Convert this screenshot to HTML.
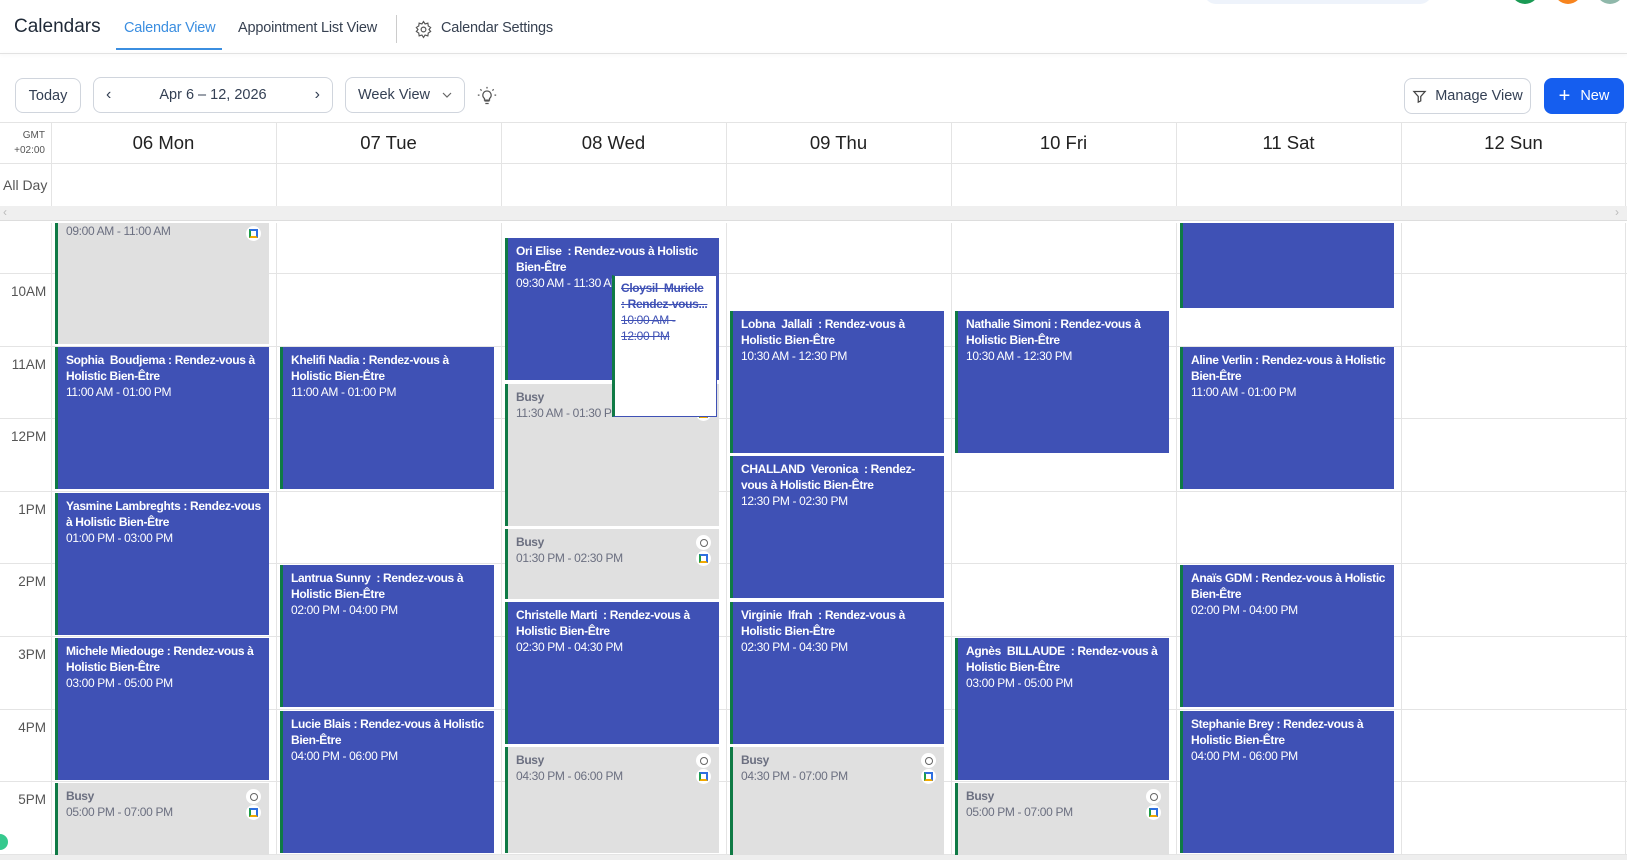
<!DOCTYPE html>
<html><head><meta charset="utf-8"><style>
*{box-sizing:border-box;margin:0;padding:0}
html,body{width:1627px;height:860px;overflow:hidden}
body{background:#fff;font-family:"Liberation Sans",Arial,sans-serif;color:#1f2937;position:relative}
.abs{position:absolute}
.btn{position:absolute;border:1px solid #d0d5dd;border-radius:8px;background:#fff;font-size:14.5px;color:#344054;display:flex;align-items:center;justify-content:center}
.vl{position:absolute;top:0;bottom:0;width:1px;background:#e4e4e4}
.ev{position:absolute;border-left:3px solid #0f7a45;background:#3f51b5;color:#fff;font-size:12px;letter-spacing:-0.35px;line-height:16px;padding:5px 7px 0 8px;overflow:hidden}
.ev b{font-weight:bold}
.busy{background:#e0e0e0;color:#6b6f80}
.ic{position:absolute;right:8px;width:15px;height:15px;border-radius:50%;background:#fff;display:flex;align-items:center;justify-content:center}
.ic1{top:6px}.ic2{top:22px}
.ic1 i{width:8px;height:8px;border:1.5px solid #666;border-radius:50%;display:block}
.ic2 i{width:9px;height:9px;border:2px solid #2f6fe0;border-bottom-color:#f2a900;border-left-color:#1e9e4a;display:block;background:#fff}
.hl{position:absolute;left:0;right:0;height:1px;background:#e4e4e4}
.lab{position:absolute;left:11px;width:35px;text-align:right;font-size:13.5px;color:#555}
.dh{position:absolute;top:123px;height:40px;font-size:18.5px;color:#222;display:flex;align-items:center;justify-content:center}
</style></head><body>
<div class="abs" style="left:1204px;top:-20px;width:228px;height:24px;border-radius:12px;background:#eef3fb"></div>
<div class="abs" style="left:1511px;top:-24px;width:28px;height:28px;border-radius:50%;background:#1a9a55"></div>
<div class="abs" style="left:1554px;top:-24px;width:28px;height:28px;border-radius:50%;background:#f7841e"></div>
<div class="abs" style="left:1596px;top:-24px;width:28px;height:28px;border-radius:50%;background:#8fb8aa"></div>
<div class="abs" style="left:14px;top:16px;font-size:19px;color:#1f2937">Calendars</div>
<div class="abs" style="left:124px;top:20px;font-size:14.5px;color:#3b8ee0;letter-spacing:-0.2px">Calendar View</div>
<div class="abs" style="left:116px;top:48px;width:106px;height:2px;background:#3b8ee0"></div>
<div class="abs" style="left:238px;top:20px;font-size:14.5px;color:#374151;letter-spacing:-0.2px">Appointment List View</div>
<div class="abs" style="left:396px;top:15px;width:1px;height:28px;background:#ccc"></div>
<svg class="abs" style="left:414px;top:20px" width="19" height="19" viewBox="0 0 24 24" fill="none" stroke="#555" stroke-width="1.5"><circle cx="12" cy="12" r="3"/><path d="M12 2l2 3 3.5-1 .5 3.5 3 2-2 2.5 2 2.5-3 2-.5 3.5-3.5-1-2 3-2-3-3.5 1-.5-3.5-3-2 2-2.5-2-2.5 3-2 .5-3.5 3.5 1z"/></svg>
<div class="abs" style="left:441px;top:20px;font-size:14.5px;color:#374151;letter-spacing:-0.2px">Calendar Settings</div>
<div class="abs" style="left:0;top:53px;width:1627px;height:1px;background:#e2e2e2;box-shadow:0 1px 3px rgba(0,0,0,.08)"></div>
<div class="btn" style="left:15px;top:78px;width:66px;height:35px">Today</div>
<div class="btn" style="left:93px;top:77px;width:240px;height:36px;justify-content:space-between;padding:0 12px"><span style="font-size:16px">‹</span><span>Apr 6 – 12, 2026</span><span style="font-size:16px">›</span></div>
<div class="btn" style="left:345px;top:77px;width:120px;height:36px;justify-content:space-between;padding:0 12px"><span>Week View</span><svg width="10" height="6" viewBox="0 0 10 6"><path d="M1 1l4 4 4-4" fill="none" stroke="#666" stroke-width="1.2"/></svg></div>
<svg class="abs" style="left:477px;top:86px" width="20" height="20" viewBox="0 0 24 24" fill="none" stroke="#555" stroke-width="1.5"><path d="M9 18h6M10 21h4M12 6a5 5 0 0 0-3 9v2h6v-2a5 5 0 0 0-3-9z"/><path d="M12 1v2M4 4l1.5 1.5M20 4l-1.5 1.5M1 11h2M21 11h2"/></svg>
<div class="btn" style="left:1404px;top:78px;width:127px;height:36px;gap:8px"><svg width="15" height="15" viewBox="0 0 24 24" fill="none" stroke="#444" stroke-width="2"><path d="M3 4h18l-7 8v7l-4 2v-9z"/></svg>Manage View</div>
<div class="btn" style="left:1544px;top:78px;width:80px;height:36px;background:#155eef;border-color:#155eef;color:#fff;gap:10px"><span style="font-size:20px;font-weight:300">+</span>New</div>
<div class="abs" style="left:0;top:122px;width:1627px;height:1px;background:#e4e4e4"></div>
<div class="abs" style="left:0;top:163px;width:1627px;height:1px;background:#e4e4e4"></div>
<div class="abs" style="left:51px;top:122px;width:1px;height:84px;background:#e4e4e4"></div>
<div class="abs" style="left:276px;top:122px;width:1px;height:84px;background:#e4e4e4"></div>
<div class="abs" style="left:501px;top:122px;width:1px;height:84px;background:#e4e4e4"></div>
<div class="abs" style="left:726px;top:122px;width:1px;height:84px;background:#e4e4e4"></div>
<div class="abs" style="left:951px;top:122px;width:1px;height:84px;background:#e4e4e4"></div>
<div class="abs" style="left:1176px;top:122px;width:1px;height:84px;background:#e4e4e4"></div>
<div class="abs" style="left:1401px;top:122px;width:1px;height:84px;background:#e4e4e4"></div>
<div class="abs" style="left:1625px;top:122px;width:1px;height:84px;background:#e4e4e4"></div>
<div class="abs" style="left:0;top:128px;width:45px;text-align:right;font-size:10px;color:#555;line-height:15px">GMT<br>+02:00</div>
<div class="abs" style="left:3px;top:177px;font-size:14px;color:#555">All Day</div>
<div class="dh" style="left:51px;width:225px">06 Mon</div>
<div class="dh" style="left:276px;width:225px">07 Tue</div>
<div class="dh" style="left:501px;width:225px">08 Wed</div>
<div class="dh" style="left:726px;width:225px">09 Thu</div>
<div class="dh" style="left:951px;width:225px">10 Fri</div>
<div class="dh" style="left:1176px;width:225px">11 Sat</div>
<div class="dh" style="left:1401px;width:225px">12 Sun</div>
<div class="abs" style="left:0;top:206px;width:1627px;height:15px;background:#efefef;border-bottom:1px solid #ddd"></div>
<div class="abs" style="left:3px;top:205px;font-size:12px;color:#bbb">‹</div>
<div class="abs" style="left:1615px;top:205px;font-size:12px;color:#bbb">›</div>
<div class="abs" style="left:0;top:223px;width:1627px;height:632px;overflow:hidden">
<div class="vl" style="left:51px"></div><div class="vl" style="left:276px"></div><div class="vl" style="left:501px"></div><div class="vl" style="left:726px"></div><div class="vl" style="left:951px"></div><div class="vl" style="left:1176px"></div><div class="vl" style="left:1401px"></div><div class="vl" style="left:1625px"></div>
<div class="hl" style="top:50px"></div><div class="hl" style="top:123px"></div><div class="hl" style="top:195px"></div><div class="hl" style="top:268px"></div><div class="hl" style="top:340px"></div><div class="hl" style="top:413px"></div><div class="hl" style="top:486px"></div><div class="hl" style="top:558px"></div><div class="hl" style="top:631px"></div>
<div class="lab" style="top:61px">10AM</div>
<div class="lab" style="top:134px">11AM</div>
<div class="lab" style="top:206px">12PM</div>
<div class="lab" style="top:279px">1PM</div>
<div class="lab" style="top:351px">2PM</div>
<div class="lab" style="top:424px">3PM</div>
<div class="lab" style="top:497px">4PM</div>
<div class="lab" style="top:569px">5PM</div>

<div class="ev busy" style="left:55px;top:-21px;width:214px;height:142px;padding-top:21px">09:00 AM - 11:00 AM<span class="ic ic2" style="top:24px"><i></i></span></div>
<div class="ev" style="left:55px;top:124px;width:214px;height:142px"><b>Sophia&nbsp; Boudjema : Rendez-vous à Holistic Bien-Être</b><br>11:00 AM - 01:00 PM</div>
<div class="ev" style="left:55px;top:270px;width:214px;height:142px"><b>Yasmine Lambreghts : Rendez-vous à Holistic Bien-Être</b><br>01:00 PM - 03:00 PM</div>
<div class="ev" style="left:55px;top:415px;width:214px;height:142px"><b>Michele Miedouge : Rendez-vous à Holistic Bien-Être</b><br>03:00 PM - 05:00 PM</div>
<div class="ev busy" style="left:55px;top:560px;width:214px;height:142px"><b>Busy</b><br>05:00 PM - 07:00 PM<span class="ic ic1"><i></i></span><span class="ic ic2"><i></i></span></div>
<div class="ev" style="left:280px;top:124px;width:214px;height:142px"><b>Khelifi Nadia : Rendez-vous à Holistic Bien-Être</b><br>11:00 AM - 01:00 PM</div>
<div class="ev" style="left:280px;top:342px;width:214px;height:142px"><b>Lantrua Sunny&nbsp; : Rendez-vous à Holistic Bien-Être</b><br>02:00 PM - 04:00 PM</div>
<div class="ev" style="left:280px;top:488px;width:214px;height:142px"><b>Lucie Blais : Rendez-vous à Holistic Bien-Être</b><br>04:00 PM - 06:00 PM</div>
<div class="ev" style="left:505px;top:15px;width:214px;height:142px"><b>Ori Elise&nbsp; : Rendez-vous à Holistic Bien-Être</b><br>09:30 AM - 11:30 AM</div>
<div class="ev busy" style="left:505px;top:161px;width:214px;height:142px"><b>Busy</b><br>11:30 AM - 01:30 PM<span class="ic ic1"><i></i></span><span class="ic ic2"><i></i></span></div>
<div class="ev" style="left:612px;top:52px;width:105px;height:142px;background:#fff;color:#3f51b5;border:1.5px solid #3f51b5;border-left:3px solid #0f7a45;text-decoration:line-through;padding:4px 5px 0 6px;white-space:nowrap"><b>Cloysil&nbsp; Muriele</b><br><b>: Rendez-vous...</b><br>10:00 AM -<br>12:00 PM</div>
<div class="ev busy" style="left:505px;top:306px;width:214px;height:70px"><b>Busy</b><br>01:30 PM - 02:30 PM<span class="ic ic1"><i></i></span><span class="ic ic2"><i></i></span></div>
<div class="ev" style="left:505px;top:379px;width:214px;height:142px"><b>Christelle Marti&nbsp; : Rendez-vous à Holistic Bien-Être</b><br>02:30 PM - 04:30 PM</div>
<div class="ev busy" style="left:505px;top:524px;width:214px;height:106px"><b>Busy</b><br>04:30 PM - 06:00 PM<span class="ic ic1"><i></i></span><span class="ic ic2"><i></i></span></div>
<div class="ev" style="left:730px;top:88px;width:214px;height:142px"><b>Lobna&nbsp; Jallali&nbsp; : Rendez-vous à Holistic Bien-Être</b><br>10:30 AM - 12:30 PM</div>
<div class="ev" style="left:730px;top:233px;width:214px;height:142px"><b>CHALLAND&nbsp; Veronica&nbsp; : Rendez-vous à Holistic Bien-Être</b><br>12:30 PM - 02:30 PM</div>
<div class="ev" style="left:730px;top:379px;width:214px;height:142px"><b>Virginie&nbsp; Ifrah&nbsp; : Rendez-vous à Holistic Bien-Être</b><br>02:30 PM - 04:30 PM</div>
<div class="ev busy" style="left:730px;top:524px;width:214px;height:179px"><b>Busy</b><br>04:30 PM - 07:00 PM<span class="ic ic1"><i></i></span><span class="ic ic2"><i></i></span></div>
<div class="ev" style="left:955px;top:88px;width:214px;height:142px"><b>Nathalie Simoni : Rendez-vous à Holistic Bien-Être</b><br>10:30 AM - 12:30 PM</div>
<div class="ev" style="left:955px;top:415px;width:214px;height:142px"><b>Agnès&nbsp; BILLAUDE&nbsp; : Rendez-vous à Holistic Bien-Être</b><br>03:00 PM - 05:00 PM</div>
<div class="ev busy" style="left:955px;top:560px;width:214px;height:142px"><b>Busy</b><br>05:00 PM - 07:00 PM<span class="ic ic1"><i></i></span><span class="ic ic2"><i></i></span></div>
<div class="ev" style="left:1180px;top:-21px;width:214px;height:106px"></div>
<div class="ev" style="left:1180px;top:124px;width:214px;height:142px"><b>Aline Verlin : Rendez-vous à Holistic Bien-Être</b><br>11:00 AM - 01:00 PM</div>
<div class="ev" style="left:1180px;top:342px;width:214px;height:142px"><b>Anaïs GDM : Rendez-vous à Holistic Bien-Être</b><br>02:00 PM - 04:00 PM</div>
<div class="ev" style="left:1180px;top:488px;width:214px;height:142px"><b>Stephanie Brey : Rendez-vous à Holistic Bien-Être</b><br>04:00 PM - 06:00 PM</div>
</div>
<div class="abs" style="left:0;top:855px;width:1627px;height:5px;background:#eee"></div>
<div class="abs" style="left:-8px;top:834px;width:16px;height:16px;border-radius:50%;background:#36c98e"></div>
</body></html>
